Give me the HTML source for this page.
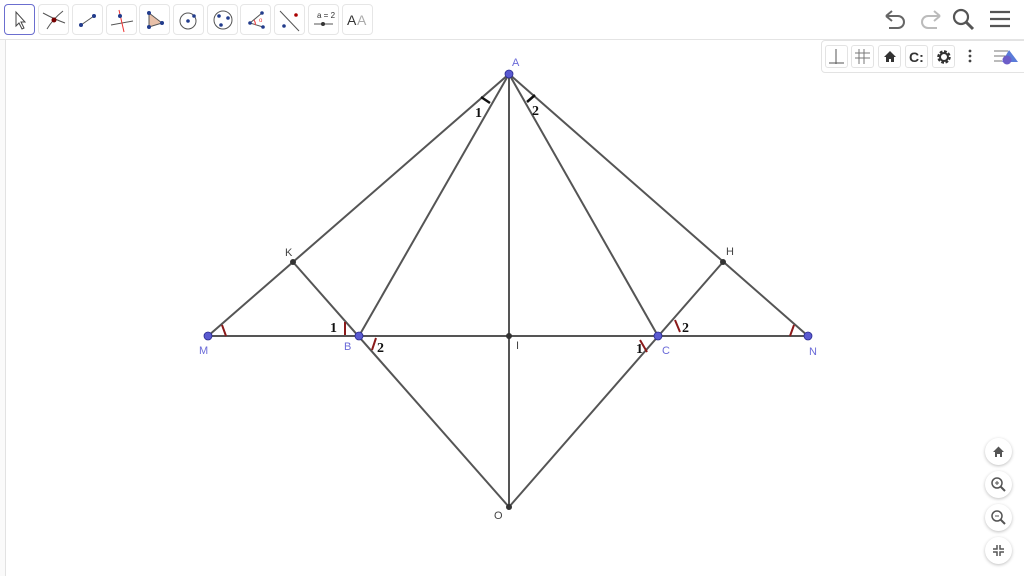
<!DOCTYPE html>
<html><head><meta charset="utf-8"><style>
html,body{margin:0;padding:0;width:1024px;height:576px;overflow:hidden;background:#fff;font-family:"Liberation Sans",sans-serif}
.top{position:absolute;left:0;top:0;width:1024px;height:39px;background:#fff;border-bottom:1px solid #e4e4e4}
.btn{position:absolute;top:4px;width:29px;height:29px;border:1px solid #e6e6e6;border-radius:4px;background:#fff}
.btn svg{position:absolute;left:0;top:0}
.sel{border:1.5px solid #6b6ecf}
.leftbar{position:absolute;left:0;top:40px;width:5px;height:536px;border-right:1px solid #e2e2e2;background:#fafafa}
.sty{position:absolute;left:821px;top:40px;width:210px;height:31px;border:1px solid #e3e3e3;border-radius:4px;background:#fff}
.sb{position:absolute;top:4px;width:21px;height:21px;border:1px solid #e3e3e3;border-radius:3px}
.zb{position:absolute;left:985px;width:27px;height:27px;border-radius:50%;background:#fff;box-shadow:0 1px 3px rgba(0,0,0,.25)}
</style></head><body>
<div class="top">
<div class="btn sel" style="left:4px"><svg width="29" height="29"><path d="M11 7 L11 21 L14 18 L17 24 L19 23 L16 17 L20 17 Z" fill="#fff" stroke="#444" stroke-width="1"/></svg></div>
<div class="btn" style="left:38px"><svg width="29" height="29"><path d="M4 8 Q15 14 26 18 M8 24 Q14 14 24 6" stroke="#555" fill="none"/><circle cx="15" cy="15" r="2.5" fill="#700"/></svg></div>
<div class="btn" style="left:72px"><svg width="29" height="29"><line x1="8" y1="20" x2="21" y2="11" stroke="#555"/><circle cx="8" cy="20" r="2" fill="#223c8c"/><circle cx="21" cy="11" r="2" fill="#223c8c"/></svg></div>
<div class="btn" style="left:106px"><svg width="29" height="29"><line x1="4" y1="20" x2="26" y2="16" stroke="#555"/><line x1="12" y1="5" x2="17" y2="27" stroke="#e33"/><circle cx="13" cy="11" r="2" fill="#223c8c"/></svg></div>
<div class="btn" style="left:139px"><svg width="29" height="29"><path d="M9 8 L22 18 L9 22 Z" fill="#e8c0a8" stroke="#555"/><circle cx="9" cy="8" r="2" fill="#223c8c"/><circle cx="22" cy="18" r="2" fill="#223c8c"/><circle cx="9" cy="22" r="2" fill="#223c8c"/></svg></div>
<div class="btn" style="left:173px"><svg width="29" height="29"><circle cx="14" cy="16" r="8" fill="none" stroke="#555"/><circle cx="14" cy="16" r="1.8" fill="#223c8c"/><circle cx="20" cy="11" r="1.8" fill="#223c8c"/></svg></div>
<div class="btn" style="left:207px"><svg width="29" height="29"><circle cx="15" cy="15" r="9" fill="none" stroke="#555"/><circle cx="11" cy="11" r="1.8" fill="#223c8c"/><circle cx="20" cy="13" r="1.8" fill="#223c8c"/><circle cx="13" cy="20" r="1.8" fill="#223c8c"/></svg></div>
<div class="btn" style="left:240px"><svg width="29" height="29"><path d="M21 8 L9 18 L22 22" fill="none" stroke="#555"/><path d="M13 15 Q15 18 14 20" fill="#f2c0c0" stroke="#e33"/><circle cx="21" cy="8" r="1.8" fill="#223c8c"/><circle cx="9" cy="18" r="1.8" fill="#223c8c"/><circle cx="22" cy="22" r="1.8" fill="#223c8c"/><text x="18" y="17" font-size="6" fill="#e33">o</text></svg></div>
<div class="btn" style="left:274px"><svg width="29" height="29"><line x1="5" y1="6" x2="24" y2="26" stroke="#555"/><circle cx="21" cy="10" r="1.8" fill="#a00"/><circle cx="9" cy="21" r="1.8" fill="#223c8c"/></svg></div>
<div class="btn" style="left:308px"><svg width="29" height="29"><text x="8" y="13" font-size="8" fill="#333" font-family="Liberation Sans">a = 2</text><line x1="5" y1="19" x2="24" y2="19" stroke="#555"/><circle cx="14" cy="19" r="2" fill="#333"/></svg></div>
<div class="btn" style="left:342px"><svg width="29" height="29"><text x="4" y="20" font-size="14" fill="#333" font-family="Liberation Sans">A</text><text x="14" y="20" font-size="14" fill="#aaa" font-family="Liberation Sans">A</text></svg></div>
<svg style="position:absolute;left:880px;top:6px" width="140" height="28">
<path d="M6 10 L12 5 M6 10 L12 15 M6 10 H18 A6 6 0 0 1 18 22 H9" fill="none" stroke="#666" stroke-width="2"/>
<path d="M60 10 L54 5 M60 10 L54 15 M60 10 H48 A6 6 0 0 0 48 22 H57" fill="none" stroke="#bbb" stroke-width="2"/>
<circle cx="81" cy="11" r="7" fill="none" stroke="#555" stroke-width="2.2"/><line x1="86" y1="16" x2="93" y2="23" stroke="#555" stroke-width="3"/>
<path d="M110 6 H130 M110 13 H130 M110 20 H130" stroke="#555" stroke-width="2.2"/>
</svg>
</div>
<div class="leftbar"></div>
<div class="sty">
<div class="sb" style="left:3px"><svg width="21" height="21"><path d="M10 3 V18 M3 17 H18" stroke="#555"/></svg></div>
<div class="sb" style="left:29px"><svg width="21" height="21"><path d="M7 3V18M12 3V18M3 7H18M3 12H18" stroke="#777"/></svg></div>
<div class="sb" style="left:56px"><svg width="21" height="21"><path d="M5 11 L11 5 L17 11 H15 V16 H12 V13 H10 V16 H7 V11Z" fill="#333"/></svg></div>
<div class="sb" style="left:83px"><svg width="21" height="21"><text x="3" y="16" font-size="14" font-weight="bold" fill="#333" font-family="Liberation Sans">C:</text></svg></div>
<div class="sb" style="left:110px"><svg width="21" height="21"><circle cx="11" cy="11" r="5" fill="none" stroke="#333" stroke-width="3.5" stroke-dasharray="2.5 1.4"/><circle cx="11" cy="11" r="4" fill="none" stroke="#333" stroke-width="2"/></svg></div>
<svg style="position:absolute;left:140px;top:6px" width="70" height="22"><circle cx="8" cy="4" r="1.4" fill="#444"/><circle cx="8" cy="9" r="1.4" fill="#444"/><circle cx="8" cy="14" r="1.4" fill="#444"/>
<path d="M32 4H46M32 9H44M32 14H40" stroke="#777"/><path d="M47 3 L56 15 H40Z" fill="#5a7bd8"/><circle cx="45" cy="13" r="4.5" fill="#6c5dc8"/></svg>
</div>
<svg style="position:absolute;left:0;top:0" width="1024" height="576">
<g stroke="#555" stroke-width="2" fill="none">
<line x1="509" y1="74" x2="208" y2="336"/><line x1="509" y1="74" x2="808" y2="336"/>
<line x1="509" y1="74" x2="359" y2="336"/><line x1="509" y1="74" x2="658" y2="336"/>
<line x1="509" y1="74" x2="509" y2="507"/><line x1="208" y1="336" x2="808" y2="336"/>
<line x1="293" y1="262" x2="509" y2="507"/><line x1="723" y1="262" x2="509" y2="507"/>
</g>
<g stroke="#8b1a1a" stroke-width="2">
<line x1="222" y1="325" x2="226" y2="336"/><line x1="794" y1="325" x2="790" y2="336"/>
<line x1="345" y1="322" x2="345" y2="335"/><line x1="376" y1="338" x2="372" y2="350"/>
<line x1="640" y1="340" x2="647" y2="352"/><line x1="675" y1="320" x2="680" y2="332"/>
</g>
<g stroke="#111" stroke-width="2.5">
<line x1="481" y1="97" x2="490" y2="103"/><line x1="527" y1="102" x2="535" y2="95"/>
</g>
<g font-family="Liberation Serif" font-weight="bold" font-size="14" fill="#111">
<text x="475" y="117">1</text><text x="532" y="115">2</text>
<text x="330" y="332">1</text><text x="377" y="352">2</text>
<text x="636" y="353">1</text><text x="682" y="332">2</text>
</g>
<g fill="#5a5ad0" stroke="#2a2a90" stroke-width="0.8">
<circle cx="509" cy="74" r="4"/><circle cx="208" cy="336" r="4"/><circle cx="359" cy="336" r="4"/><circle cx="658" cy="336" r="4"/><circle cx="808" cy="336" r="4"/>
</g>
<g fill="#333"><circle cx="293" cy="262" r="3"/><circle cx="723" cy="262" r="3"/><circle cx="509" cy="336" r="3"/><circle cx="509" cy="507" r="3"/></g>
<g font-family="Liberation Sans" font-size="11">
<text x="512" y="66" fill="#6a6ad8">A</text><text x="199" y="354" fill="#6a6ad8">M</text><text x="344" y="350" fill="#6a6ad8">B</text>
<text x="662" y="354" fill="#6a6ad8">C</text><text x="809" y="355" fill="#6a6ad8">N</text>
<text x="285" y="256" fill="#444">K</text><text x="726" y="255" fill="#444">H</text><text x="516" y="349" fill="#444">I</text><text x="494" y="519" fill="#444">O</text>
</g>
</svg>
<div class="zb" style="top:438px"><svg width="27" height="27"><path d="M8 14 L13.5 8.5 L19 14 H17 V19 H15 V16 H12 V19 H10 V14Z" fill="#555"/></svg></div>
<div class="zb" style="top:471px"><svg width="27" height="27"><circle cx="12" cy="12" r="5" fill="none" stroke="#555" stroke-width="1.5"/><path d="M10 12H14M12 10V14" stroke="#555"/><line x1="15.5" y1="15.5" x2="20" y2="20" stroke="#555" stroke-width="2"/></svg></div>
<div class="zb" style="top:504px"><svg width="27" height="27"><circle cx="12" cy="12" r="5" fill="none" stroke="#555" stroke-width="1.5"/><path d="M10 12H14" stroke="#555"/><line x1="15.5" y1="15.5" x2="20" y2="20" stroke="#555" stroke-width="2"/></svg></div>
<div class="zb" style="top:537px"><svg width="27" height="27"><path d="M12 8V12H8M15 8V12H19M12 19V15H8M15 19V15H19" fill="none" stroke="#555" stroke-width="1.5"/></svg></div>
</body></html>
